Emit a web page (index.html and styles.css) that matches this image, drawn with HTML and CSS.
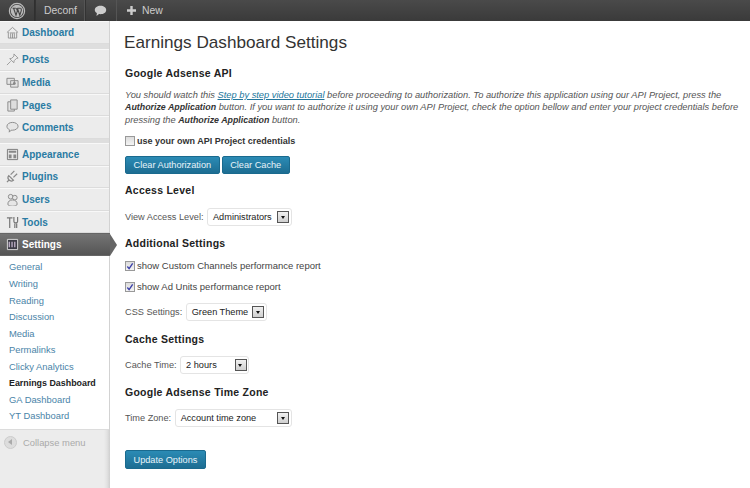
FILE: index.html
```html
<!DOCTYPE html>
<html lang="en">
<head>
<meta charset="utf-8">
<title>Earnings Dashboard Settings</title>
<link rel="stylesheet" href="styles.css">
</head>
<body>
<header class="adminbar">
  <div class="ab-item ab-wp">
    <svg width="18" height="18" viewBox="0 0 18 18"><circle cx="9" cy="9" r="7.6" fill="none" stroke="#bbb" stroke-width="1.2"/><circle cx="9" cy="9" r="6.2" fill="#bbb"/><path d="M4.6 6.2h3.2M9.4 6.2h3.2M5.6 6.2l2.4 7 1.4-4.4-1-2.6M9.4 6.2l2.4 7 1.5-4.6c.3-1 0-1.6-.5-2.4" fill="none" stroke="#464646" stroke-width="1.1"/></svg>
  </div>
  <div class="ab-item ab-site">Deconf</div>
  <div class="ab-item ab-comment">
    <svg width="13" height="12" viewBox="0 0 13 12"><path d="M6.5 .8c3.2 0 5.7 1.8 5.7 4.2S9.700 9.200 6.500 9.200c-.5 0-1 0-1.500-.1L2.500 11l.4-2.900C1.600 7.300.8 6.200.8 5 .8 2.600 3.300.8 6.500.8z" fill="#ccc"/></svg>
  </div>
  <div class="ab-item ab-new"><svg class="plus" width="9" height="9" viewBox="0 0 9 9"><path d="M3.300 0h2.400v3.300H9v2.400H5.700V9H3.300V5.700H0V3.300h3.300z" fill="#ccc"/></svg>New</div>
</header>
<div class="wrap">
  <nav class="sidebar">
    <ul class="menu first">
      <li class="item"><svg class="ic" viewBox="0 0 14 14"><path d="M1 7l6-5.500L13 7M2.500 6.500V13h9V6.500M5 13V8M7 13V8M9 13V8M4 7.500h6" fill="none" stroke="#888" stroke-width=".9"/></svg><a>Dashboard</a></li>
    </ul>
    <ul class="menu">
      <li class="item"><svg class="ic" viewBox="0 0 14 14"><path d="M8.500 1l4.500 4.500-1.800.4-2.400 2.400-.4 2.200-4.400-4.400 2.200-.4 2.400-2.400zM5 9l-4 4" fill="none" stroke="#999" stroke-width="1"/></svg><a>Posts</a></li>
      <li class="item"><svg class="ic" viewBox="0 0 14 14"><path d="M1 2.500h8v6.500H1zM5 5h8v7H5z" fill="#e4e4e4" stroke="#888"/><circle cx="9" cy="8" r="1.500" fill="#888"/></svg><a>Media</a></li>
      <li class="item"><svg class="ic" viewBox="0 0 14 14"><path d="M2 3h7v10H2z" fill="#e4e4e4" stroke="#888"/><path d="M5 1h7v10H5z" fill="#ddd" stroke="#888"/></svg><a>Pages</a></li>
      <li class="item"><svg class="ic" viewBox="0 0 14 14"><path d="M7 1.500c3.300 0 6 1.800 6 4.200s-2.700 4.200-6 4.200H5.500L3.500 12l.2-2.600C2 8.600 1 7.300 1 5.700 1 3.300 3.700 1.500 7 1.500z" fill="#e6e6e6" stroke="#888"/></svg><a>Comments</a></li>
    </ul>
    <ul class="menu">
      <li class="item"><svg class="ic" viewBox="0 0 14 14"><path d="M1.500 1.500h11v11h-11z" fill="#e6e6e6" stroke="#777"/><path d="M3 3h8v2H3zM3 7h3v4H3zM8 7h3v4H8z" fill="#888"/></svg><a>Appearance</a></li>
      <li class="item"><svg class="ic" viewBox="0 0 14 14"><path d="M5 5l4-4M8 8l4-4M3 6l5 5c-2 1.500-3.500 1-5-.5S1.500 8 3 6zM3 11l-2 2" fill="none" stroke="#888" stroke-width="1.300"/></svg><a>Plugins</a></li>
      <li class="item"><svg class="ic" viewBox="0 0 14 14"><circle cx="5" cy="4" r="2.500" fill="#e6e6e6" stroke="#888"/><circle cx="9.500" cy="5" r="2.500" fill="#e6e6e6" stroke="#888"/><path d="M2 12c0-3 2-4.500 5-4.500s5 1.500 5 4.500-10 3-10 0z" fill="#e6e6e6" stroke="#888"/></svg><a>Users</a></li>
      <li class="item"><svg class="ic" viewBox="0 0 14 14"><path d="M1 2h6M4 2v11M9.500 7v6M11.500 7v6M8.500 1v5c0 1 1 1.500 2 1.500s2-.5 2-1.500V1" fill="none" stroke="#777" stroke-width="1.300"/></svg><a>Tools</a></li>
      <li class="item active"><svg class="ic" viewBox="0 0 14 14"><path d="M1.500 1.500h11v11h-11z" fill="#3c3c46" stroke="#ddd"/><path d="M3.500 4v6M6.500 4v6M9.500 4v6" stroke="#d8c6e0" stroke-width="1.200"/></svg><a>Settings</a><span class="arrow"></span></li>
    </ul>
    <ul class="submenu">
      <li>General</li>
      <li>Writing</li>
      <li>Reading</li>
      <li>Discussion</li>
      <li>Media</li>
      <li>Permalinks</li>
      <li>Clicky Analytics</li>
      <li class="current">Earnings Dashboard</li>
      <li>GA Dashboard</li>
      <li>YT Dashboard</li>
    </ul>
    <div class="collapse"><span class="collapse-btn"><span class="tri"></span></span>Collapse menu</div>
  </nav>
  <main class="content">
    <h1>Earnings Dashboard Settings</h1>
    <h2 class="h-api">Google Adsense API</h2>
    <p class="intro"><em>You should watch this <a class="link">Step by step video tutorial</a> before proceeding to authorization. To authorize this application using our API Project, press the <b>Authorize Application</b> button. If you want to authorize it using your own API Project, check the option bellow and enter your project credentials before pressing the <b>Authorize Application</b> button.</em></p>
    <label class="check own"><span class="box"></span><b>use your own API Project credentials</b></label>
    <div class="buttons">
      <span class="btn">Clear Authorization</span>
      <span class="btn">Clear Cache</span>
    </div>
    <h2 class="h-access">Access Level</h2>
    <div class="field"><span>View Access Level:</span><span class="select s-admin"><span class="val">Administrators</span><span class="drop"></span></span></div>
    <h2 class="h-add">Additional Settings</h2>
    <label class="check c1"><span class="box on"><svg width="9" height="9" viewBox="0 0 9 9"><path d="M1.500 4.500l2 2.500 4-6" fill="none" stroke="#3b3fa8" stroke-width="1.500"/></svg></span>show Custom Channels performance report</label>
    <label class="check c2"><span class="box on"><svg width="9" height="9" viewBox="0 0 9 9"><path d="M1.500 4.500l2 2.500 4-6" fill="none" stroke="#3b3fa8" stroke-width="1.500"/></svg></span>show Ad Units performance report</label>
    <div class="field f-css"><span>CSS Settings:</span><span class="select s-css"><span class="val">Green Theme</span><span class="drop"></span></span></div>
    <h2 class="h-cache">Cache Settings</h2>
    <div class="field f-cache"><span>Cache Time:</span><span class="select s-cache"><span class="val">2 hours</span><span class="drop"></span></span></div>
    <h2 class="h-zone">Google Adsense Time Zone</h2>
    <div class="field f-zone"><span>Time Zone:</span><span class="select s-zone"><span class="val">Account time zone</span><span class="drop"></span></span></div>
    <div class="update"><span class="btn">Update Options</span></div>
  </main>
</div>
</body>
</html>
```

FILE: styles.css
```css
* { box-sizing: border-box; }
html, body { margin: 0; padding: 0; }
body {
  width: 750px;
  height: 488px;
  overflow: hidden;
  background: #fff;
  color: #333;
  font-family: "Liberation Sans", Arial, sans-serif;
  font-size: 9.6px;
}
ul { list-style: none; margin: 0; padding: 0; }

.adminbar {
  display: flex;
  height: 21px;
  background: linear-gradient(#4a4a4a, #3a3a3a);
  color: #ccc;
  font-size: 10.4px;
}
.ab-item {
  display: flex;
  align-items: center;
  justify-content: center;
  flex: none;
  border-right: 1px solid #555;
  box-shadow: 1px 0 0 #333 inset;
}
.ab-wp { width: 35px; border-right-color: #2f2f2f; box-shadow: none; }
.ab-site { width: 50px; padding-left: 2px; }
.ab-comment { width: 32px; }
.ab-new { border: 0; box-shadow: none; padding-left: 10px; }
.plus { margin-right: 6px; }

.wrap { display: flex; height: 467px; }
.sidebar {
  width: 110px;
  flex: none;
  background: linear-gradient(to right, #ececec 104px, #e2e2e2 107px, #cfcfcf 110px);
}
.menu { background: #dedede; width: 109px; padding-bottom: 4px; }
.menu.first { padding-bottom: 5px; }
.item {
  position: relative;
  display: flex;
  align-items: center;
  height: 22.600px;
  padding-left: 6px;
  background: #ececec;
  border-top: 1px solid #f8f8f8;
  border-bottom: 1px solid #dcdcdc;
  font-size: 10px;
  font-weight: bold;
  width: 109px;
  margin-right: 1px;
}
.menu .item a { color: #2a7ba3; }
.ic { width: 13px; height: 13px; margin-right: 3px; flex: none; }
.item.active {
  background: linear-gradient(#747474, #555);
  border-color: #666;
  width: 110px;
  margin-right: 0;
}
.menu .item.active a { color: #fff; }
.arrow {
  position: absolute;
  right: -7px;
  top: 0;
  border-left: 7px solid #666;
  border-top: 11px solid transparent;
  border-bottom: 11px solid transparent;
}
.menu:has(.active) { padding-bottom: 0; }
.submenu {
  background: #fff;
  width: 109px;
  padding: 3.500px 0 4px 9px;
  border-bottom: 1px solid #dcdcdc;
  font-size: 9.400px;
  color: #4a84a8;
}
.submenu li { height: 16.550px; line-height: 16.550px; white-space: nowrap; }
.submenu .current { color: #222; font-weight: bold; font-size: 8.900px; }
.collapse {
  display: flex;
  align-items: center;
  gap: 6px;
  padding: 6px 0 0 4px;
  color: #aaa;
  font-size: 9.400px;
}
.collapse-btn {
  display: flex;
  align-items: center;
  justify-content: center;
  width: 13px;
  height: 13px;
  border-radius: 50%;
  background: #ddd;
  border: 1px solid #ccc;
}
.tri {
  border-right: 4px solid #aaa;
  border-top: 3px solid transparent;
  border-bottom: 3px solid transparent;
  margin-right: 1px;
}

.content { flex: 1; padding: 0 0 0 15px; min-width: 0; }
h1 {
  margin: 11px 0 0 -1px;
  font-size: 17.150px;
  line-height: 21px;
  font-weight: normal;
  color: #333;
}
h2 {
  margin: 0;
  font-size: 10.500px;
  line-height: 13px;
  font-weight: bold;
  color: #222;
  letter-spacing: .25px;
}
.h-api { margin-top: 14px; }
.intro {
  margin: 9px 0 0;
  width: 618px;
  font-size: 9.300px;
  line-height: 12.300px;
  color: #555;
}
.intro b { color: #333; font-size: 8.850px; }
.link { color: #21759b; text-decoration: underline; }
.check {
  display: flex;
  align-items: center;
  gap: 2px;
  color: #444;
  font-size: 9.500px;
  line-height: 12px;
}
.check b { color: #333; font-size: 9px; }
.box {
  width: 10px;
  height: 10px;
  flex: none;
  display: flex;
  align-items: center;
  justify-content: center;
  border: 1px solid #999;
  background: linear-gradient(#dcdcdc, #f4f4f4);
}
.own { margin-top: 9px; }
.buttons { display: flex; gap: 2px; margin-top: 9px; }
.btn {
  display: inline-flex;
  align-items: center;
  justify-content: center;
  height: 18.500px;
  padding: 0 7.500px;
  border: 1px solid #1a6a8e;
  border-radius: 2px;
  background: linear-gradient(#2b8bb5, #1d6d92);
  color: #e8f4fa;
  font-size: 9.200px;
  white-space: nowrap;
}
.h-access { margin-top: 10px; }
.field {
  display: flex;
  align-items: center;
  gap: 3.500px;
  margin-top: 11px;
  height: 17px;
  color: #555;
  font-size: 9.200px;
}
.select {
  display: flex;
  align-items: center;
  justify-content: space-between;
  height: 18px;
  padding: 0 1.500px 0 5px;
  background: #fff;
  border: 1px solid #e4e4e4;
  border-radius: 3px;
  color: #222;
  font-size: 9.200px;
}
.drop {
  position: relative;
  width: 12px;
  height: 12px;
  border: 1px solid #555;
  background: linear-gradient(#f0f0f0, #cfcfcf);
  flex: none;
}
.drop::after {
  content: "";
  position: absolute;
  left: 2.500px;
  top: 4px;
  border-top: 3px solid #111;
  border-left: 2.500px solid transparent;
  border-right: 2.500px solid transparent;
}
.s-admin { width: 85px; }
.s-css { width: 81px; }
.s-cache { width: 69px; }
.s-zone { width: 117px; }
.h-add { margin-top: 12px; }
.c1 { margin-top: 10px; }
.c2 { margin-top: 9px; }
.f-css { margin-top: 10px; }
.h-cache { margin-top: 13px; }
.f-cache { margin-top: 10px; }
.h-zone { margin-top: 13px; }
.f-zone { margin-top: 10px; }
.update { margin-top: 24px; }
```
